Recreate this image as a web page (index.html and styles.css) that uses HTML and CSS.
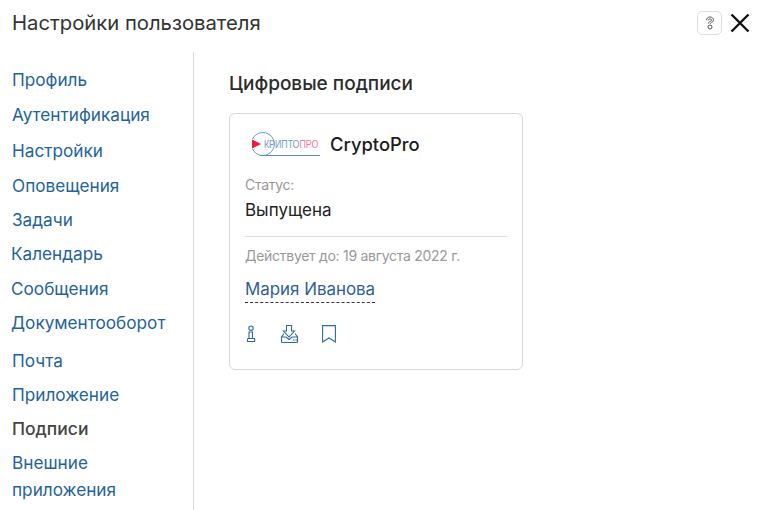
FILE: index.html
```html
<!DOCTYPE html>
<html lang="ru">
<head>
<meta charset="utf-8">
<title>Настройки пользователя</title>
<link rel="stylesheet" href="styles.css">
</head>
<body>
<div class="page">
  <header class="header">
    <h1 class="title">Настройки пользователя</h1>
    <div class="actions">
      <button class="help" aria-label="Справка">
        <svg width="10" height="14" viewBox="0 0 10 14" fill="none" stroke="#555" stroke-width="1"><path d="M1.500 4.200C1.500 2.200 3 1 5 1s3.500 1.200 3.500 2.900c0 1.500-1.200 2.100-2.200 2.600-.6.3-.8.6-.8 1.200"/><path d="M3.300 4.300c0-.8.7-1.300 1.700-1.300s1.600.5 1.600 1.100c0 .7-.8 1-1.600 1.400-1 .5-1.600 1.100-1.600 2.100"/><circle cx="5" cy="11" r="2"/></svg>
      </button>
      <button class="close" aria-label="Закрыть">
        <svg width="20" height="20" viewBox="0 0 20 20" stroke="#111" stroke-width="2.400" fill="none"><path d="M1.500 1.500l17 17M18.500 1.500l-17 17"/></svg>
      </button>
    </div>
  </header>
  <div class="body">
    <nav class="nav">
      <a class="item">Профиль</a>
      <a class="item wide">Аутентификация</a>
      <a class="item">Настройки</a>
      <a class="item tight">Оповещения</a>
      <a class="item tight">Задачи</a>
      <a class="item wide shift">Календарь</a>
      <a class="item tight shift">Сообщения</a>
      <a class="item tight shift">Документооборот</a>
      <a class="item gap">Почта</a>
      <a class="item tight">Приложение</a>
      <a class="item tight current">Подписи</a>
      <a class="item tight multi">Внешние приложения</a>
    </nav>
    <main class="content">
      <h2 class="heading">Цифровые подписи</h2>
      <section class="card">
        <div class="brand">
          <svg class="logo" width="72" height="26" viewBox="0 0 72 26" fill="none">
            <path d="M3.500 8A11.500 11.500 0 1 1 3.500 18" stroke="#6f9bc8" stroke-width="1"/>
            <path d="M11 24.500H71" stroke="#5b8cc0" stroke-width="1"/>
            <path d="M3 8.500l9 4.500-9 4.500z" fill="#f0183c"/>
            <text class="logo-a" transform="translate(15 17) scale(.8 1)">КРИПТО<tspan class="logo-b">ПРО</tspan></text>
          </svg>
          <span class="brand-name">CryptoPro</span>
        </div>
        <div class="label">Статус:</div>
        <div class="status">Выпущена</div>
        <hr class="rule">
        <div class="valid">Действует до: 19 августа 2022 г.</div>
        <div class="owner"><span class="owner-name">Мария Иванова</span></div>
        <div class="tools">
          <svg width="10" height="18" viewBox="0 0 10 18" fill="none" stroke="#2f6a9c" stroke-width="1.100"><circle cx="5" cy="3.200" r="2.200"/><path d="M3 7h3.500v6.500H3zM2 13.500h6.500c.4 1 .4 2 0 3H1.500c-.4-1-.2-2 .5-3z"/></svg>
          <svg width="19" height="18" viewBox="0 0 19 18" fill="none" stroke="#2f6a9c" stroke-width="1.100"><path d="M6.500.5h5v5.500h3l-5.500 6-5.500-6h3z"/><path d="M4 8.500L1.500 12v4.500a1 1 0 0 0 1 1h14a1 1 0 0 0 1-1V12L15 8.500M1.500 12H6l3 2.500 3-2.500h6"/><path d="M13 15h1.500M15.500 15H17"/></svg>
          <svg class="mark" width="14" height="18" viewBox="0 0 14 18" fill="none" stroke="#2f6a9c" stroke-width="1.100"><path d="M.6.6h12.800v16.400L7 13 .6 17z"/></svg>
        </div>
      </section>
    </main>
  </div>
</div>
</body>
</html>
```
FILE: styles.css
```css
* { box-sizing: border-box; }
html, body { margin: 0; padding: 0; }
body {
  width: 757px;
  height: 510px;
  overflow: hidden;
  background: #fff;
  font-family: Inter, "Noto Sans", sans-serif;
  color: #222;
}
.page { display: flex; flex-direction: column; height: 510px; }
.header {
  display: flex;
  align-items: center;
  justify-content: space-between;
  height: 52px;
  padding: 0 7px 6px 12px;
}
.title { margin: 0; font-size: 20.250px; font-weight: 400; color: #333; line-height: 28px; }
.actions { display: flex; align-items: center; gap: 8px; }
button { background: none; border: 0; padding: 0; display: flex; align-items: center; justify-content: center; }
.help {
  width: 25px; height: 24px;
  border: 1px solid #ddd;
  border-radius: 5px;
}
.close { width: 20px; height: 24px; }
.body { flex: 1; display: flex; min-height: 0; }
.nav {
  width: 194px;
  flex: none;
  border-right: 1px solid #d9d9d9;
  padding: 17px 12px 0 12px;
  display: flex;
  flex-direction: column;
}
.item {
  display: block;
  font-size: 17.200px;
  line-height: 22px;
  color: #24639a;
  margin-bottom: 13px;
}
.item.wide { margin-bottom: 14px; }
.item.shift { margin-left: -1px; }
.item.tight { margin-bottom: 12px; }
.item.wide.shift { margin-bottom: 13px; }
.item.gap { margin-top: 4px; margin-bottom: 12px; }
.item.current { color: #444; font-weight: 500; font-size: 17.500px; }
.item.multi { line-height: 27px; margin-top: -3px; width: 120px; }
.content { flex: 1; padding: 20px 0 0 35px; }
.heading { margin: 0 0 17px; font-size: 19px; line-height: 24px; font-weight: 500; color: #2b2b2b; }
.card {
  width: 294px;
  height: 257px;
  border: 1px solid #d9d9d9;
  border-radius: 6px;
  padding: 17px 15px 0 15px;
}
.brand { display: flex; align-items: center; gap: 9px; height: 26px; margin-bottom: 18px; }
.logo { flex: none; margin-left: 4px; }
.logo-a { font-family: "Liberation Sans", sans-serif; font-size: 11px; fill: #6f9bc8; }
.logo-b { fill: #ee7d90; }
.brand-name { font-size: 18.400px; font-weight: 500; color: #1c1c1c; }
.label { font-size: 14px; letter-spacing: -.3px; line-height: 20px; color: #999; margin-bottom: 3px; }
.status { font-size: 17px; line-height: 24px; color: #222; margin-bottom: 14px; }
.rule { border: 0; border-top: 1px solid #ddd; margin: 0 0 9px; }
.valid { font-size: 14px; letter-spacing: -.28px; line-height: 20px; color: #999; margin-bottom: 10px; }
.owner { margin-bottom: 22px; }
.owner-name {
  display: inline-block;
  font-size: 16.900px;
  line-height: 26px;
  color: #2f5f94;
  border-bottom: 1px dashed #333;
}
.tools { display: flex; align-items: center; gap: 24px; padding-left: 1px; }
.mark { margin-left: -1px; }
```
